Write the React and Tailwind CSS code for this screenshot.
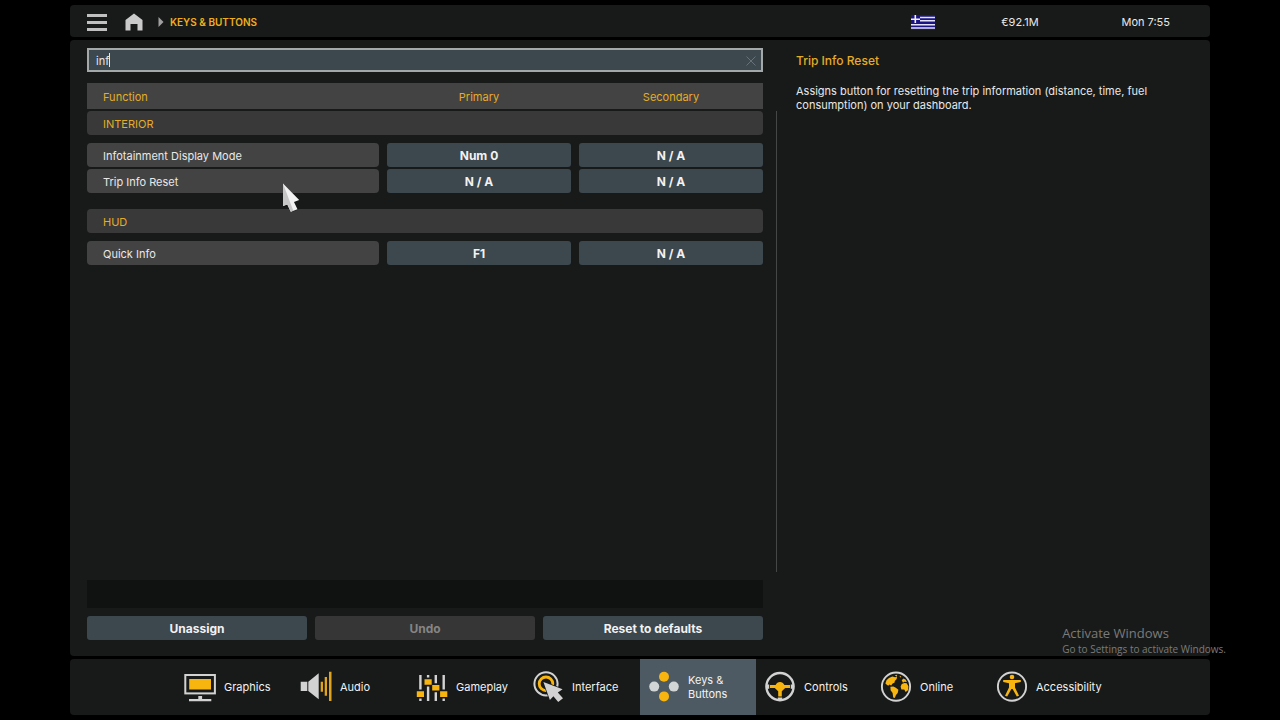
import React, { useState } from 'react';
import clsx from 'clsx';

const sections = [
    {
        name: 'INTERIOR',
        bindings: [
            { label: 'Infotainment Display Mode', primary: 'Num 0', secondary: 'N / A' },
            { label: 'Trip Info Reset', primary: 'N / A', secondary: 'N / A' },
        ],
    },
    {
        name: 'HUD',
        bindings: [
            { label: 'Quick Info', primary: 'F1', secondary: 'N / A' },
        ],
    },
];

const GraphicsIcon = () => (
    <svg viewBox="0 0 32 32" className="w-8 h-8 shrink-0">
        <rect x="1.3" y="4" width="29.6" height="18.4" fill="none" stroke="#d2d2d2" strokeWidth="2" />
        <rect x="5.2" y="8" width="21.8" height="10.5" fill="#f8b510" />
        <path d="M14.3 25h3.8v3h9.2v2.3H5V28h9.3z" fill="#d2d2d2" />
    </svg>
);

const AudioIcon = () => (
    <svg viewBox="0 0 32 32" className="w-8 h-8 shrink-0">
        <path d="M0.7 10.7h6.6V20H0.7zM8.3 10.7l10.4-8.4v26L8.3 20z" fill="#d2d2d2" />
        <path d="M20.7 10.7H23v10h-2.3zM24.7 6H27v18.7h-2.3zM29 0.8h2.5V30H29z" fill="#e0a41c" />
    </svg>
);

const GameplayIcon = () => (
    <svg viewBox="0 0 32 32" className="w-8 h-8 shrink-0">
        <g fill="#d2d2d2">
            <path d="M3.2 4h2.4v14.5H3.2zM3.2 27.5h2.4V30H3.2z" />
            <path d="M10.9 4h2.4v2.5h-2.4zM10.9 15.5h2.4V30h-2.4z" />
            <path d="M18.6 4H21v8.3h-2.4zM18.6 21.2H21V30h-2.4z" />
            <path d="M26.5 4h2.4v14.5h-2.4zM26.5 27.5h2.4V30h-2.4z" />
        </g>
        <path d="M0.8 20.3h7.2v5.6H0.8zM8.5 8.2h7.2v5.6H8.5zM16.2 13.9h7.2v5.6h-7.2zM24.1 20.3h7.2v5.6h-7.2z" fill="#f8b510" />
    </svg>
);

const InterfaceIcon = () => (
    <svg viewBox="0 0 32 32" className="w-8 h-8 shrink-0">
        <circle cx="14" cy="12.8" r="11.6" fill="none" stroke="#d2d2d2" strokeWidth="2" />
        <circle cx="14" cy="12.8" r="6.8" fill="none" stroke="#f8b510" strokeWidth="2.8" />
        <path d="M11.4 11L30.6 18.2 25.8 21.5 31 27.2 26.2 31 21.4 25.2 17.9 29z" fill="#d2d2d2" stroke="#181a19" strokeWidth="1.4" paintOrder="stroke" />
    </svg>
);

const KeysIcon = () => (
    <svg viewBox="0 0 32 32" className="w-8 h-8 shrink-0">
        <circle cx="16" cy="5.8" r="5" fill="#f8b510" />
        <circle cx="16" cy="25.4" r="5" fill="#f8b510" />
        <circle cx="6.2" cy="15.6" r="5" fill="#d2d5d5" />
        <circle cx="25.8" cy="15.6" r="5" fill="#d2d5d5" />
    </svg>
);

const ControlsIcon = () => (
    <svg viewBox="0 0 32 32" className="w-8 h-8 shrink-0">
        <circle cx="16" cy="15.6" r="13.6" fill="none" stroke="#d2d2d2" strokeWidth="2.4" />
        <path d="M2.6 13.4h2.6v4.4H2.6zM26.8 13.4h2.6v4.4h-2.6zM13.8 26.4h4.4v2.8h-4.4z" fill="#d2d2d2" />
        <path d="M6 14.1h5.6c1-2 2.4-3.2 4.4-3.2s3.4 1.2 4.4 3.2H26v2.8h-4.8l-3.4 3.4v5.2h-3.6v-5.2l-3.4-3.4H6z" fill="#f8b510" />
    </svg>
);

const OnlineIcon = () => (
    <svg viewBox="0 0 32 32" className="w-8 h-8 shrink-0">
        <circle cx="16" cy="15.6" r="14.1" fill="none" stroke="#d2d2d2" strokeWidth="1.9" />
        <g fill="#f8b510">
            <path d="M5.4 12.6L6.5 9.2 9 7 12.3 5.5 15.2 6.2 17 5.6 16.7 8 14.8 10 14.6 11.6 12.4 12.8 11.2 14.4 9.4 13.6 8.3 14.8 6.8 13.8z" />
            <path d="M10.4 15.7L13.3 15.5 15.4 16.5 18.4 18.8 17.7 22 16 23.9 14.8 27 13.2 26.4 12.6 22 10.6 19.3z" />
            <path d="M20.6 15.4L21.8 13 24.4 11.9 26.7 12.3 28.4 15.2 28.2 19 25.7 20.9 24.2 18.6 21.4 18.4z" />
            <path d="M21.7 9.2L23.5 7.4 25.8 8.8 26.8 11 24.3 10.7 23 11.8z" />
            <path d="M14.6 4.3l2.7-0.6-0.7 1.7zM19.5 4.7l1.7 0.8-0.9 1.3z" />
        </g>
    </svg>
);

const AccessibilityIcon = () => (
    <svg viewBox="0 0 32 32" className="w-8 h-8 shrink-0">
        <circle cx="16" cy="15.6" r="14.1" fill="none" stroke="#d2d2d2" strokeWidth="1.9" />
        <circle cx="16" cy="6" r="2.3" fill="#f8b510" />
        <path d="M7.2 8.9h17.6v2l-5.8 1.3v4.2l4 8.3-2.2 0.9L16.6 18h-1.2l-4.2 7.6-2.2-0.9 4-8.3v-4.2l-5.8-1.3z" fill="#f8b510" />
    </svg>
);

const tabs = [
    { label: 'Graphics', Icon: GraphicsIcon },
    { label: 'Audio', Icon: AudioIcon },
    { label: 'Gameplay', Icon: GameplayIcon },
    { label: 'Interface', Icon: InterfaceIcon },
    { label: 'Keys & Buttons', Icon: KeysIcon },
    { label: 'Controls', Icon: ControlsIcon },
    { label: 'Online', Icon: OnlineIcon },
    { label: 'Accessibility', Icon: AccessibilityIcon },
];

const GreekFlag = () => (
    <svg viewBox="0 0 24 15" className="w-6 h-[15px]" role="img" aria-label="Greece">
        <rect width="24" height="15" fill="#1b1482" />
        <path d="M9 2.5h15M9 5.8h15M0 9.8h24M0 13h24" stroke="#e4e2f6" strokeWidth="1.5" />
        <path d="M0 4.2h9M4.3 0v8" stroke="#f0effa" strokeWidth="1.6" />
    </svg>
);

const TopBar = () => (
    <header className="h-8 flex items-center pt-0.5 pl-[17px] pr-10 rounded bg-[#181a19]">
        <button aria-label="Menu" className="w-5 flex flex-col gap-1">
            <span className="w-full h-[3px] bg-[#c0c0c0]" />
            <span className="w-full h-[3px] bg-[#c0c0c0]" />
            <span className="w-full h-[3px] bg-[#c0c0c0]" />
        </button>
        <button aria-label="Home" className="ml-[18px]">
            <svg viewBox="0 0 18 18" className="w-[18px] h-[18px]">
                <path d="M9 0.5L17.5 7v10.5h-5V11h-7v6.5h-5V7z" fill="#cacaca" />
            </svg>
        </button>
        <svg viewBox="0 0 6 10" className="ml-[15px] w-[6px] h-[10px]">
            <path d="M0.5 0L5.5 5 0.5 10z" fill="#a0a0a0" />
        </svg>
        <h1 className="ml-[6px] text-[10px] font-semibold text-[#f0ae1c]">KEYS &amp; BUTTONS</h1>
        <div className="ml-auto flex items-center">
            <GreekFlag />
            <span className="w-[170px] text-center">€92.1M</span>
            <span className="w-[65px] text-right">Mon 7:55</span>
        </div>
    </header>
);

const BindingButton = ({ children }) => (
    <button className="block w-full h-6 pt-px rounded-[3px] bg-[#3d474e] text-[12px] font-bold text-[#f2f2f2]">
        {children}
    </button>
);

const BindingsTable = () => (
    <table className="w-full table-fixed border-collapse">
        <colgroup>
            <col className="w-[300px]" />
            <col />
            <col className="w-[184px]" />
        </colgroup>
        <thead>
            <tr className="h-[26px] bg-[#434343] text-[#e6ac28]">
                <th className="p-0 pt-0.5 pl-4 text-left font-normal">Function</th>
                <th className="p-0 pt-0.5 pr-2 font-normal">Primary</th>
                <th className="p-0 pt-0.5 font-normal">Secondary</th>
            </tr>
        </thead>
        {sections.map((section, i) => (
            <tbody key={section.name}>
                <tr>
                    <th colSpan={3} scope="rowgroup" className={clsx('p-0 pb-[6px] font-normal text-left', i === 0 ? 'pt-0.5' : 'pt-4')}>
                        <div className="h-6 flex items-center pl-4 pt-0.5 rounded-sm bg-[#393939] text-[#e6ac28]">
                            {section.name}
                        </div>
                    </th>
                </tr>
                {section.bindings.map(binding => (
                    <tr key={binding.label}>
                        <th scope="row" className="p-0 pt-0.5 pr-2 font-normal">
                            <div className="h-6 flex items-center pl-4 pt-0.5 rounded-sm bg-[#434343] text-[#e8e8e8]">
                                {binding.label}
                            </div>
                        </th>
                        <td className="p-0 pt-0.5 pr-2"><BindingButton>{binding.primary}</BindingButton></td>
                        <td className="p-0 pt-0.5"><BindingButton>{binding.secondary}</BindingButton></td>
                    </tr>
                ))}
            </tbody>
        ))}
    </table>
);

const App = () => {
    const [search, setSearch] = useState('inf');
    const [activeTab, setActiveTab] = useState('Keys & Buttons');

    return (
        <div className="relative min-h-screen flex flex-col gap-[3px] px-[70px] py-[5px] bg-black font-[Inter,sans-serif] text-[11px] text-[#e8e8e8]">
            <TopBar />

            <main className="flex-1 grid grid-cols-[minmax(0,676fr)_auto_minmax(0,413fr)] pl-[17px] pr-5 rounded bg-[#181a19]">
                <div className="flex flex-col pt-2 pb-4">
                    <div className="relative">
                        <input
                            type="text"
                            aria-label="Search functions"
                            value={search}
                            onChange={(e) => setSearch(e.target.value)}
                            className="block w-full h-6 pl-[7px] pr-6 pt-px border-2 border-[#a3a8a8] bg-[#3d474e] text-[#e8e8e8] caret-transparent outline-none"
                        />
                        {/* Solid caret after the typed text */}
                        <div aria-hidden="true" className="absolute inset-y-0 left-[9px] flex items-center pointer-events-none whitespace-pre">
                            <span className="invisible">{search}</span>
                            <span className="w-px h-[14px] bg-[#e8e8e8]" />
                        </div>
                        <button aria-label="Clear search" onClick={() => setSearch('')} className="absolute right-[7px] top-2">
                            <svg viewBox="0 0 10 10" className="w-[10px] h-[10px]">
                                <path d="M0.5 0.5l9 9M9.5 0.5l-9 9" stroke="#66717a" strokeWidth="1" />
                            </svg>
                        </button>
                    </div>

                    <div className="mt-[11px]">
                        <BindingsTable />
                    </div>

                    {/* Status strip */}
                    <div className="mt-auto h-7 bg-[#101211]" />

                    <div className="mt-2 grid grid-cols-3 gap-2 text-[12px] font-bold">
                        <button className="h-6 pt-px rounded-[3px] bg-[#3d474e] text-[#f2f2f2]">Unassign</button>
                        <button disabled className="h-6 pt-px rounded-[3px] bg-[#363636] text-[#858585]">Undo</button>
                        <button className="h-6 pt-px rounded-[3px] bg-[#3d474e] text-[#f2f2f2]">Reset to defaults</button>
                    </div>
                </div>

                <div className="ml-[13px] w-px mt-[71px] mb-[84px] bg-[#454746]" />

                <aside className="pl-[19px] pt-3">
                    <h2 className="text-[12px] leading-[18px] font-medium text-[#e6ac28]">Trip Info Reset</h2>
                    <p className="mt-[14px] leading-[14px]">
                        Assigns button for resetting the trip information (distance, time, fuel consumption) on your dashboard.
                    </p>
                </aside>
            </main>

            <nav className="h-14 flex justify-center rounded bg-[#181a19]">
                {tabs.map(({ label, Icon }) => (
                    <button
                        key={label}
                        onClick={() => setActiveTab(label)}
                        className={clsx(
                            'w-[116px] flex items-center gap-2 pl-2 text-left leading-[14px] text-[#f2f2f2]',
                            activeTab === label && 'bg-[#4d5a63]'
                        )}
                    >
                        <Icon />
                        <span>{label}</span>
                    </button>
                ))}
            </nav>

            {/* Mouse pointer */}
            <svg viewBox="0 0 20 32" className="absolute left-[281px] top-[182px] w-5 h-8 pointer-events-none">
                <path d="M3 3v22.5l5-2.5 3.5 7 6-2.5-4-7 5-2.5z" fill="#000" opacity="0.35" />
                <path d="M2 1.5v22.5l4.3-1.6 3.5 7.3 6.7-2.5-3.5-7.2 5.2-2z" fill="#f2f2f2" />
                <path d="M2 1.5v22.5l4.3-1.6 3.5 7.3 2.5-0.9z" fill="#c6c6c6" />
            </svg>

            <div className="absolute right-[54px] bottom-16 pointer-events-none font-['Open_Sans',sans-serif] text-[#7b7b7b]">
                <p className="text-[13px] leading-[18px]">Activate Windows</p>
                <p className="text-[10px] leading-[14px]">Go to Settings to activate Windows.</p>
            </div>
        </div>
    );
};

export default App;
